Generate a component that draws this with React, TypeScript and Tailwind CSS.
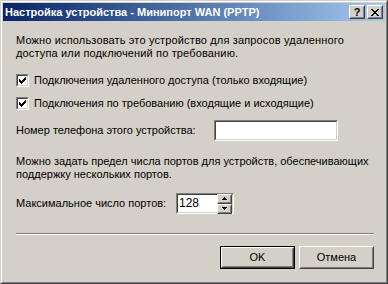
import React from "react";

const raisedOuter =
  "border border-t-white border-l-white border-r-[#404040] border-b-[#404040]";
const raisedInner =
  "border border-t-[#d4d0c8] border-l-[#d4d0c8] border-r-[#808080] border-b-[#808080]";
const sunkenOuter =
  "border border-t-[#808080] border-l-[#808080] border-r-white border-b-white";
const sunkenInner =
  "border border-t-[#404040] border-l-[#404040] border-r-[#d4d0c8] border-b-[#d4d0c8]";

const Check = ({ label }: { label: string }) => (
  <label className="flex items-center gap-[5px] h-[13px]">
    <span className={`${sunkenOuter} w-[13px] h-[13px] shrink-0`}>
      <span className={`${sunkenInner} flex items-center justify-center w-full h-full bg-white`}>
        <svg width="7" height="7" viewBox="0 0 7 7" shapeRendering="crispEdges">
          <path
            fill="#000"
            d="M6 0h1v3h-1zM5 1h1v3h-1zM4 2h1v3h-1zM0 2h1v3h-1zM1 3h1v3h-1zM2 4h1v3h-1zM3 3h1v3h-1z"
          />
        </svg>
      </span>
    </span>
    <span>{label}</span>
  </label>
);

const Button = ({ children, primary }: { children: React.ReactNode; primary?: boolean }) => (
  <div className={primary ? "border border-black w-[75px] h-[23px]" : "w-[75px] h-[23px]"}>
    <div className={`${raisedOuter} w-full h-full`}>
      <div className={`${raisedInner} w-full h-full flex items-center justify-center`}>
        {children}
      </div>
    </div>
  </div>
);

const CaptionButton = ({ children }: { children: React.ReactNode }) => (
  <div className={`${raisedOuter} w-[16px] h-[14px] bg-[#d4d0c8]`}>
    <div className={`${raisedInner} w-full h-full flex items-center justify-center`}>
      {children}
    </div>
  </div>
);

const SpinArrow = ({ up }: { up?: boolean }) => (
  <div className={`${raisedOuter} w-[15px] h-[10px] bg-[#d4d0c8]`}>
    <div className={`${raisedInner} w-full h-full flex items-center justify-center`}>
      <svg width="5" height="3" viewBox="0 0 5 3" shapeRendering="crispEdges">
        <path fill="#000" d={up ? "M2 0h1v1h1v1h1v1H0V2h1V1h1z" : "M0 0h5v1H4v1H3v1H2V2H1V1H0z"} />
      </svg>
    </div>
  </div>
);

export default function App() {
  return (
    <div className="w-[388px] h-[284px] bg-[#d4d0c8] font-['Liberation_Sans',Arial,sans-serif] text-[11px] leading-[13px] text-black">
      <div className="w-full h-full border border-t-[#d4d0c8] border-l-[#d4d0c8] border-r-[#404040] border-b-[#404040]">
        <div className="w-full h-full border border-t-white border-l-white border-r-[#808080] border-b-[#808080] p-px flex flex-col">
          <div className="h-[18px] flex items-center justify-between bg-linear-to-r from-[#0a246a] to-[#a6caf0] pl-[2px] pr-[2px]">
            <span className="font-bold text-white">Настройка устройства - Минипорт WAN (PPTP)</span>
            <div className="flex gap-[2px]">
              <CaptionButton>
                <span className="font-bold text-[11px] leading-none">?</span>
              </CaptionButton>
              <CaptionButton>
                <svg width="8" height="7" viewBox="0 0 8 7" shapeRendering="crispEdges">
                  <path
                    fill="#000"
                    d="M0 0h2v1h1v1h2V1h1V0h2v1H7v1H6v1H5v1h1v1h1v1h1v1H6V6H5V5H3v1H2v1H0V6h1V5h1V4h1V3H2V2H1V1H0z"
                  />
                </svg>
              </CaptionButton>
            </div>
          </div>

          <div className="flex flex-col pl-[13px] pr-[11px]">
            <p className="mt-[13px] tracking-[0.15px] whitespace-nowrap">
              Можно использовать это устройство для запросов удаленного
              <br />
              доступа или подключений по требованию.
            </p>
            <div className="mt-[14px]">
              <Check label="Подключения удаленного доступа (только входящие)" />
            </div>
            <div className="mt-[10px]">
              <Check label="Подключения по требованию (входящие и исходящие)" />
            </div>
            <div className="mt-[10px] flex items-center h-[21px]">
              <span className="w-[198px]">Номер телефона этого устройства:</span>
              <div className={`${sunkenOuter} w-[124px] h-[21px]`}>
                <div className={`${sunkenInner} w-full h-full bg-white`} />
              </div>
            </div>
            <p className="mt-[14px] whitespace-nowrap">
              Можно задать предел числа портов для устройств, обеспечивающих
              <br />
              поддержку нескольких портов.
            </p>
            <div className="mt-[12px] flex items-center h-[21px]">
              <span className="w-[160px]">Максимальное число портов:</span>
              <div className={`${sunkenOuter} w-[58px] h-[21px]`}>
                <div className={`${sunkenInner} w-full h-full bg-white flex items-center justify-between`}>
                  <span className="pl-[1px] text-[12px]">128</span>
                  <div className="flex flex-col">
                    <SpinArrow up />
                    <SpinArrow />
                  </div>
                </div>
              </div>
            </div>
            <div className="mt-[19px] border-t border-t-[#808080] border-b border-b-white" />
            <div className="mt-[11px] flex justify-end gap-[4px]">
              <Button primary>OK</Button>
              <Button>Отмена</Button>
            </div>
          </div>
        </div>
      </div>
    </div>
  );
}
